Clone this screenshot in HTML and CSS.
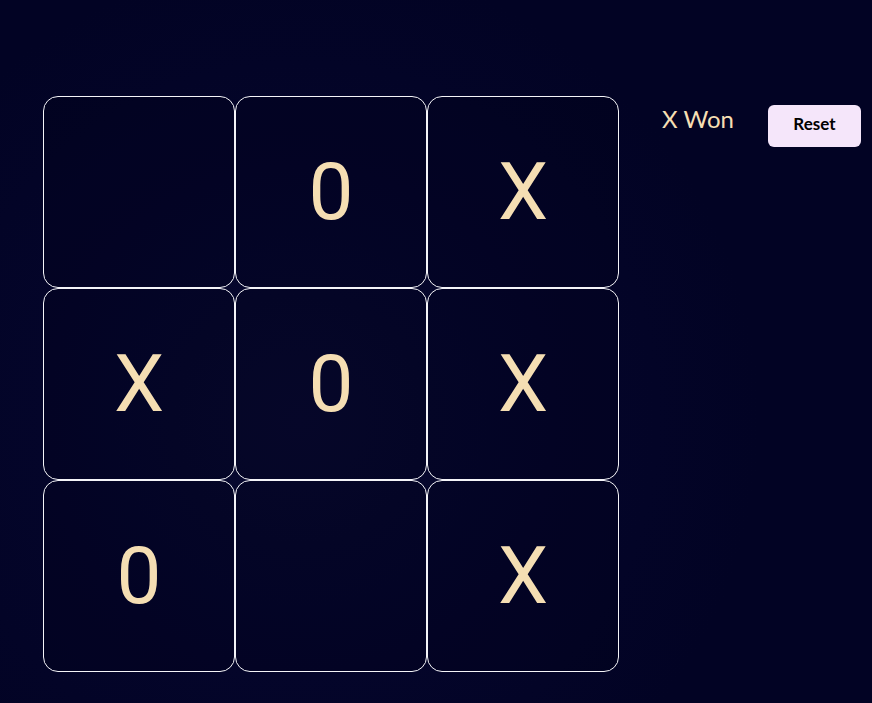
FILE: index.html
```html
<!DOCTYPE html>
<html lang="en">
<head>
<meta charset="utf-8">
<title>Tic Tac Toe</title>
<link rel="stylesheet" href="styles.css">
</head>
<body>
<main class="app">
  <div class="board">
    <button class="cell"></button>
    <button class="cell">0</button>
    <button class="cell">X</button>
    <button class="cell">X</button>
    <button class="cell">0</button>
    <button class="cell">X</button>
    <button class="cell">0</button>
    <button class="cell"></button>
    <button class="cell">X</button>
  </div>
  <div class="side">
    <p class="status">X Won</p>
    <button class="reset">Reset</button>
  </div>
</main>
</body>
</html>
```

FILE: styles.css
```css
html, body {
  margin: 0;
  height: 100%;
}
body {
  background: radial-gradient(ellipse 460px 460px at 300px 420px, #080930 0%, #04052a 55%, #020324 100%);
  background-color: #020324;
  font-family: Lato, "Open Sans", sans-serif;
}
.app {
  display: flex;
  align-items: flex-start;
  gap: 43px;
  padding: 96px 0 0 43px;
}
.board {
  display: grid;
  grid-template-columns: repeat(3, 192px);
  grid-template-rows: repeat(3, 192px);
}
.cell {
  box-sizing: border-box;
  width: 192px;
  height: 192px;
  margin: 0;
  padding: 0;
  border: 1px solid #f4f4f8;
  border-radius: 15px;
  background: rgba(0, 0, 20, 0.25);
  color: #f5deb3;
  font-family: Roboto, "Open Sans", sans-serif;
  font-size: 80px;
  font-weight: 400;
  line-height: 1;
  display: flex;
  align-items: center;
  justify-content: center;
}
.side {
  display: flex;
  align-items: center;
  gap: 34px;
  margin-top: 9px;
}
.status {
  margin: -14px 0 0 0;
  color: #f5deb3;
  font-size: 24px;
  font-weight: 400;
  line-height: 1;
}
.reset {
  box-sizing: border-box;
  width: 93px;
  height: 42px;
  border: none;
  border-radius: 6px;
  background: #f5e6fa;
  color: #000;
  font-family: Lato, "Open Sans", sans-serif;
  font-size: 17px;
  font-weight: 700;
  padding: 0 0 5px 0;
}
```
